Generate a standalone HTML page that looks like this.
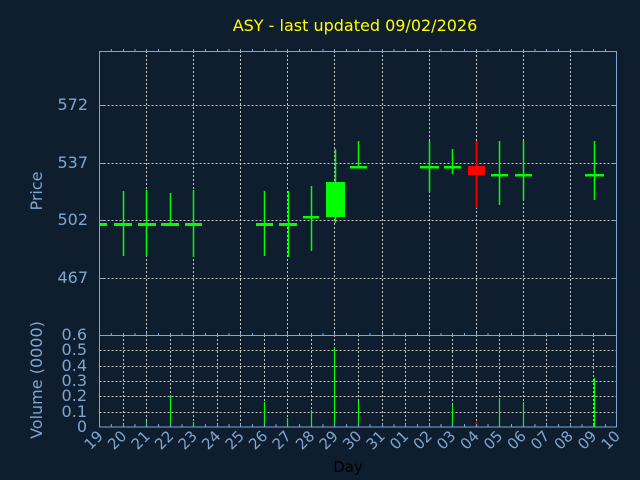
<!DOCTYPE html>
<html><head><meta charset="utf-8"><style>
html,body{margin:0;padding:0;background:#0f1e2f;}
svg{display:block;font-family:"DejaVu Sans","Liberation Sans",sans-serif;}
</style></head><body>
<svg width="640" height="480" viewBox="0 0 640 480" xmlns="http://www.w3.org/2000/svg">
<rect width="640" height="480" fill="#0f1e2f"/>
<text x="355" y="31" fill="#ffff00" font-size="16" text-anchor="middle">ASY - last updated 09/02/2026</text>
<g stroke="#c8c8c8" stroke-width="1" stroke-dasharray="2,2" fill="none">
<path d="M99.5 105.5H617M99.5 163.5H617M99.5 220.5H617M99.5 278.5H617"/>
<path d="M146.5 51V335M193.5 51V335M240.5 51V335M287.5 51V335M334.5 51V335M382.5 51V335M429.5 51V335M476.5 51V335M523.5 51V335M570.5 51V335"/>
<path d="M99.5 350.5H617M99.5 366.5H617M99.5 381.5H617M99.5 396.5H617M99.5 412.5H617"/>
<path d="M123.5 335V427M146.5 335V427M170.5 335V427M193.5 335V427M217.5 335V427M240.5 335V427M264.5 335V427M287.5 335V427M311.5 335V427M334.5 335V427M358.5 335V427M382.5 335V427M405.5 335V427M429.5 335V427M452.5 335V427M476.5 335V427M499.5 335V427M523.5 335V427M546.5 335V427M570.5 335V427M593.5 335V427"/>
</g>
<!-- candles -->
<g stroke="#00ff00" stroke-width="1.5">
<path d="M123.5 191V256M146.5 190V256M170.5 193V224M193.5 190V257M264.5 191V256M288.5 191V257M311.5 186V251M335.5 149V223M358.5 141V167M429.5 141V192M452.5 149V174M499.5 141V205M523.5 141V200M594.5 141V200"/>
</g>
<g fill="#00ff00">
<rect x="99" y="223" width="8" height="3"/>
<rect x="114" y="223" width="18" height="3"/>
<rect x="138" y="223" width="18" height="3"/>
<rect x="161" y="223" width="18" height="3"/>
<rect x="185" y="223" width="17" height="3"/>
<rect x="256" y="223" width="17" height="3"/>
<rect x="279" y="223" width="18" height="3"/>
<rect x="303" y="216" width="16" height="2.5"/>
<rect x="326" y="182" width="19" height="35"/>
<rect x="350" y="166" width="17" height="2.5"/>
<rect x="420" y="166" width="19" height="2.5"/>
<rect x="444" y="166" width="17" height="2.5"/>
<rect x="491" y="174" width="17" height="2.5"/>
<rect x="515" y="174" width="17" height="2.5"/>
<rect x="585" y="174" width="19" height="2.5"/>
</g>
<path d="M476.5 141V208" stroke="#ff0000" stroke-width="1.5"/>
<rect x="468" y="166" width="17" height="9" fill="#ff0000"/>
<!-- volume bars -->
<g stroke="#00ff00" stroke-width="1.2">
<path d="M123.5 427V425M146.5 427V421M170.5 427V395M193.5 427V422M264.5 427V402M287.5 427V418M311.5 427V410M334.5 427V348M358.5 427V401M452.5 427V405M499.5 427V398M523.5 427V402M594.5 427V378"/>
</g>
<path d="M476.5 427V422" stroke="#ff0000" stroke-width="1.5"/>
<!-- frames -->
<g stroke="#7fa6d0" fill="none" stroke-width="1">
<rect x="99.5" y="51.5" width="517" height="375.5"/>
<path d="M99.5 335.5H617"/>
</g>
<g stroke="#7fa6d0" stroke-width="1">
<path d="M99.5 105.5h4M99.5 163.5h4M99.5 220.5h4M99.5 278.5h4M617 105.5h-4M617 163.5h-4M617 220.5h-4M617 278.5h-4"/>
<path id="tk" d="M111.3 427v-3M123.5 427v-3M135 427v-3M146.5 427v-3M158.5 427v-3M170.5 427v-3M182 427v-3M193.5 427v-3M205.5 427v-3M217.5 427v-3M229 427v-3M240.5 427v-3M252.5 427v-3M264.5 427v-3M276 427v-3M287.5 427v-3M299.5 427v-3M311.5 427v-3M323 427v-3M334.5 427v-3M346.5 427v-3M358.5 427v-3M370 427v-3M382.5 427v-3M394 427v-3M405.5 427v-3M417.5 427v-3M429.5 427v-3M441 427v-3M452.5 427v-3M464.5 427v-3M476.5 427v-3M488 427v-3M499.5 427v-3M511.5 427v-3M523.5 427v-3M535 427v-3M546.5 427v-3M558.5 427v-3M570.5 427v-3M582 427v-3M593.5 427v-3M605.5 427v-3"/>
<use href="#tk" transform="translate(0,-375)"/>
<use href="#tk" transform="translate(0,-91)"/>
</g>
<g fill="#7fa6d0" font-size="16" text-anchor="end">
<text x="88" y="110">572</text>
<text x="88" y="168">537</text>
<text x="88" y="225">502</text>
<text x="88" y="283">467</text>
<text x="87" y="340">0.6</text>
<text x="87" y="355">0.5</text>
<text x="87" y="371">0.4</text>
<text x="87" y="386">0.3</text>
<text x="87" y="401">0.2</text>
<text x="87" y="417">0.1</text>
<text x="87" y="432">0</text>
<text transform="translate(42,191) rotate(-90)" text-anchor="middle">Price</text>
<text transform="translate(42,380) rotate(-90)" text-anchor="middle">Volume (0000)</text>
</g>
<g fill="#7fa6d0" font-size="15" text-anchor="end">
<text transform="translate(104,437) rotate(-45)">19</text>
<text transform="translate(127.5,437) rotate(-45)">20</text>
<text transform="translate(151,437) rotate(-45)">21</text>
<text transform="translate(174.5,437) rotate(-45)">22</text>
<text transform="translate(198,437) rotate(-45)">23</text>
<text transform="translate(221.5,437) rotate(-45)">24</text>
<text transform="translate(245,437) rotate(-45)">25</text>
<text transform="translate(268.5,437) rotate(-45)">26</text>
<text transform="translate(292,437) rotate(-45)">27</text>
<text transform="translate(315.5,437) rotate(-45)">28</text>
<text transform="translate(339,437) rotate(-45)">29</text>
<text transform="translate(362.5,437) rotate(-45)">30</text>
<text transform="translate(386,437) rotate(-45)">31</text>
<text transform="translate(409.5,437) rotate(-45)">01</text>
<text transform="translate(433,437) rotate(-45)">02</text>
<text transform="translate(456.5,437) rotate(-45)">03</text>
<text transform="translate(480,437) rotate(-45)">04</text>
<text transform="translate(503.5,437) rotate(-45)">05</text>
<text transform="translate(527,437) rotate(-45)">06</text>
<text transform="translate(550.5,437) rotate(-45)">07</text>
<text transform="translate(574,437) rotate(-45)">08</text>
<text transform="translate(597.5,437) rotate(-45)">09</text>
<text transform="translate(621,437) rotate(-45)">10</text>
</g>
<text x="348" y="472" fill="#000000" font-size="15" text-anchor="middle">Day</text>
</svg>
</body></html>
